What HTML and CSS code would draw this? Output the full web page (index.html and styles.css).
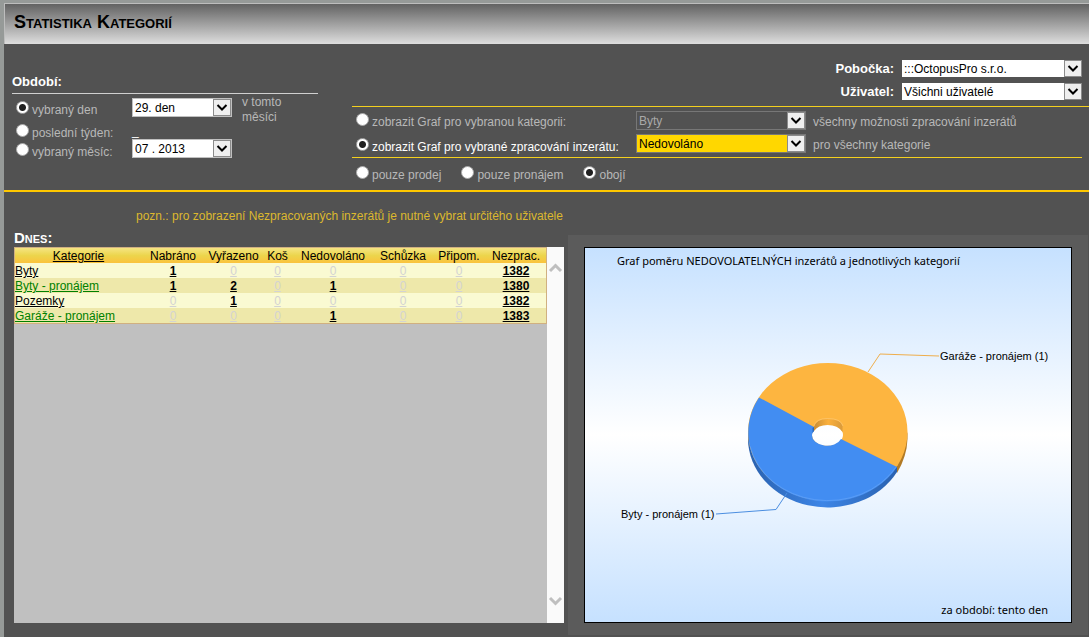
FILE: index.html
```html
<!DOCTYPE html>
<html lang="cs">
<head>
<meta charset="utf-8">
<title>Statistika Kategorií</title>
<link rel="stylesheet" href="styles.css">
</head>
<body>
<svg class="defs" aria-hidden="true"><symbol id="chevron" viewBox="0 0 16 15"><path d="M3.500 5l4.500 4.500 4.500-4.500" fill="none" stroke="#000" stroke-width="2"/></symbol></svg>
<div class="page">
  <header class="title-bar"><h1>Statistika Kategorií</h1></header>

  <form class="filters">
    <fieldset class="period">
      <legend>Období:</legend>
      <div class="period-grid">
        <label class="choice"><input type="radio" name="period" checked><span>vybraný den</span></label>
        <span class="select day"><select aria-label="Den"><option>29. den</option></select><svg><use href="#chevron"/></svg></span>
        <span class="hint">v tomto měsíci</span>
        <label class="choice week"><input type="radio" name="period"><span>poslední týden:</span></label>
        <a class="week-link" href="#">_</a>
        <label class="choice month"><input type="radio" name="period"><span>vybraný měsíc:</span></label>
        <span class="select day"><select aria-label="Měsíc"><option>07 . 2013</option></select><svg><use href="#chevron"/></svg></span>
      </div>
    </fieldset>

    <div class="scope">
      <div class="owner">
        <label for="branch">Pobočka:</label>
        <span class="select plain"><select id="branch"><option>:::OctopusPro s.r.o.</option></select><svg><use href="#chevron"/></svg></span>
        <label for="user">Uživatel:</label>
        <span class="select plain"><select id="user"><option>Všichni uživatelé</option></select><svg><use href="#chevron"/></svg></span>
      </div>
      <div class="graph-options">
        <label class="choice"><input type="radio" name="graph"><span>zobrazit Graf pro vybranou kategorii:</span></label>
        <span class="select muted"><select aria-label="Kategorie"><option>Byty</option></select><svg><use href="#chevron"/></svg></span>
        <span class="hint">všechny možnosti zpracování inzerátů</span>
        <label class="choice active"><input type="radio" name="graph" checked><span>zobrazit Graf pro vybrané zpracování inzerátu:</span></label>
        <span class="select gold"><select aria-label="Zpracování"><option>Nedovoláno</option></select><svg><use href="#chevron"/></svg></span>
        <span class="hint">pro všechny kategorie</span>
      </div>
      <div class="deal">
        <label class="choice"><input type="radio" name="deal"><span>pouze prodej</span></label>
        <label class="choice"><input type="radio" name="deal"><span>pouze pronájem</span></label>
        <label class="choice"><input type="radio" name="deal" checked><span>obojí</span></label>
      </div>
    </div>
  </form>

  <main class="content">
    <section class="stats">
      <p class="note">pozn.: pro zobrazení Nezpracovaných inzerátů je nutné vybrat určitého uživatele</p>
      <h2>Dnes:</h2>
      <div class="list">
        <div class="list-body">
          <table>
            <colgroup><col class="c-name"><col class="c-taken"><col class="c-out"><col class="c-bin"><col class="c-missed"><col class="c-meet"><col class="c-remind"><col class="c-open"></colgroup>
            <thead><tr><th><a href="#">Kategorie</a></th><th>Nabráno</th><th>Vyřazeno</th><th>Koš</th><th>Nedovoláno</th><th>Schůzka</th><th>Připom.</th><th>Nezprac.</th></tr></thead>
            <tbody>
              <tr><td><a href="#">Byty</a></td><td><a class="num" href="#">1</a></td><td><a class="zero" href="#">0</a></td><td><a class="zero" href="#">0</a></td><td><a class="zero" href="#">0</a></td><td><a class="zero" href="#">0</a></td><td><a class="zero" href="#">0</a></td><td><a class="num" href="#">1382</a></td></tr>
              <tr><td><a class="rent" href="#">Byty - pronájem</a></td><td><a class="num" href="#">1</a></td><td><a class="num" href="#">2</a></td><td><a class="zero" href="#">0</a></td><td><a class="num" href="#">1</a></td><td><a class="zero" href="#">0</a></td><td><a class="zero" href="#">0</a></td><td><a class="num" href="#">1380</a></td></tr>
              <tr><td><a href="#">Pozemky</a></td><td><a class="zero" href="#">0</a></td><td><a class="num" href="#">1</a></td><td><a class="zero" href="#">0</a></td><td><a class="zero" href="#">0</a></td><td><a class="zero" href="#">0</a></td><td><a class="zero" href="#">0</a></td><td><a class="num" href="#">1382</a></td></tr>
              <tr><td><a class="rent" href="#">Garáže - pronájem</a></td><td><a class="zero" href="#">0</a></td><td><a class="zero" href="#">0</a></td><td><a class="zero" href="#">0</a></td><td><a class="num" href="#">1</a></td><td><a class="zero" href="#">0</a></td><td><a class="zero" href="#">0</a></td><td><a class="num" href="#">1383</a></td></tr>
            </tbody>
          </table>
        </div>
        <div class="scrollbar" aria-hidden="true">
          <svg width="17" height="17" viewBox="0 0 17 17"><path d="M3 11L8.500 5.500 14 11" fill="none" stroke="#bfbfbf" stroke-width="3"/></svg>
          <svg width="17" height="17" viewBox="0 0 17 17"><path d="M3 4L8.500 9.500 14 4" fill="none" stroke="#bfbfbf" stroke-width="3"/></svg>
        </div>
      </div>
    </section>

    <section class="chart-panel">
      <div class="chart">
        <svg viewBox="0 0 486 374" role="img" aria-label="Graf poměru">
          <defs>
            <linearGradient id="blueSide"><stop offset="0" stop-color="#2a61ae"/><stop offset="0.500" stop-color="#3d85e6"/><stop offset="1" stop-color="#2a61ae"/></linearGradient>
            <linearGradient id="goldHole"><stop offset="0" stop-color="#c98d35"/><stop offset="0.500" stop-color="#fbb03b"/><stop offset="1" stop-color="#d99a3b"/></linearGradient>
          </defs>
          <text class="chart-title" x="32" y="17">Graf poměru NEDOVOLATELNÝCH inzerátů a jednotlivých kategorií</text>
          <path d="M163 184V191A79.500 69 0 0 0 312 224V217Z" fill="url(#blueSide)"/>
          <path d="M322.500 184V191Q322 208 312 225V218Z" fill="#b17a26"/>
          <path fill-rule="evenodd" fill="#fdb540" d="M163 184A79.750 69 0 0 1 322.500 184A79.750 69 0 0 1 163 184ZM227 187A15 10.500 0 0 0 258 187A15 10.500 0 0 0 227 187Z"/>
          <path fill="#428df2" d="M174 149.500L229 179V183Q227 185 227 187A15 10.500 0 0 0 256 191L312 219A79.500 69 0 0 1 174 149.500Z"/>
          <path d="M229 183V179Q231 171 242.500 171Q256 171 257.500 178V184Q253 177 242.500 177Q233 177 229 183Z" fill="url(#goldHole)"/>
          <path d="M229 178Q231 170.500 242.500 170.500Q256 170.500 258 178" fill="none" stroke="#ffd08a" stroke-width="0.500"/>
          <path d="M227.500 180L229 179V183L227.500 185Z" fill="#2e68b5"/>
          <path d="M165 198A79.500 69 0 0 0 311 219" fill="none" stroke="#70adfb" stroke-width="0.500"/>
          <path d="M283 124L295 106 354 108" fill="none" stroke="#efae4c"/>
          <path d="M202 245L191 261.500 131 266" fill="none" stroke="#4b8ee0"/>
          <text class="slice-label" x="355" y="112">Garáže - pronájem (1)</text>
          <text class="slice-label" x="36" y="270">Byty - pronájem (1)</text>
          <text class="chart-title" x="463" y="366" text-anchor="end">za období: tento den</text>
        </svg>
      </div>
    </section>
  </main>
</div>
</body>
</html>
```

FILE: styles.css
```css
* { box-sizing: border-box; }

body {
  margin: 0;
  padding: 3px 0 0 4px;
  min-height: 100vh;
  display: flex;
  background: #969a98;
  color: #b8b8b8;
  font: 12px/15px "Liberation Sans", Arial, sans-serif;
}

.defs { position: absolute; width: 0; height: 0; }

.page { flex: 1; display: flex; flex-direction: column; background: #525252; }

.title-bar {
  height: 41px;
  padding: 8px 9px;
  border: solid #bdbdbd;
  border-width: 1px 0 0 1px;
  background: linear-gradient(#626262, #dedede);
}

h1, h2 { margin: 0; font-variant: small-caps; font-weight: bold; }
h1 { font-size: 18px; line-height: 20px; color: #000; }
h2 { margin-left: 10px; font-size: 15px; line-height: 17px; color: #fff; }

.filters {
  display: flex;
  gap: 34px;
  height: 148px;
  border-bottom: 2px solid #ffc800;
}

.period { flex: 0 0 306px; margin: 29px 0 0 8px; padding: 0; border: 0; }
.period legend {
  width: 100%;
  padding: 1px 0 3px;
  border-bottom: 1px solid #d0d0d0;
  font-size: 13px;
  font-weight: bold;
  line-height: 16px;
  color: #fff;
}
.period-grid {
  display: grid;
  grid-template-columns: 116px 100px 50px;
  grid-template-rows: 30px 15px 22px;
  column-gap: 4px;
  align-items: start;
}
.period-grid .select { margin-top: 4px; }
.period-grid .month ~ .select { margin-top: 0; }
.period-grid .hint { padding: 1px 0 0 6px; }
.period-grid .choice { padding-top: 7px; }
.period-grid .week { padding-top: 0; }
.period-grid .month { padding-top: 4px; }
.week-link { grid-column: 2 / 4; color: #fff; text-decoration: none; line-height: 15px; }

.choice { display: flex; align-items: flex-start; gap: 3px; padding-left: 4px; }
.choice span { padding-top: 2px; }
.choice input {
  appearance: none;
  flex: none;
  width: 13px;
  height: 13px;
  margin: 0;
  border: 1px solid #a9a9a9;
  border-radius: 50%;
  background: #fff;
}
.choice input:checked { background: radial-gradient(circle, #202020 3px, #fff 4px); }
.active { color: #fff; }

.select { position: relative; display: block; height: 19px; border: 1px solid #c0c0c0; }
.select select {
  appearance: none;
  display: block;
  width: 100%;
  height: 100%;
  margin: 0;
  padding: 1px 20px 0 2px;
  border: 0;
  border-radius: 0;
  background: #fff;
  color: #000;
  font: inherit;
}
.select svg {
  position: absolute;
  top: 0;
  right: 0;
  width: 18px;
  height: 17px;
  border: 1px solid #8b8b8b;
  background: #efefef;
  pointer-events: none;
}
.select.plain { height: 17px; border: 0; }
.select.muted, .select.gold { border-color: #777; }
.select.muted select { background: #525252; color: #a9a9a9; }
.select.gold select { background: #ffd700; }

.scope { flex: 1; padding-top: 16px; }
.owner {
  display: grid;
  grid-template-columns: 1fr 180px;
  gap: 6px 8px;
  padding: 0 7px 6px 0;
  border-bottom: 1px solid #f4d01e;
}
.owner label { padding-top: 1px; font-size: 13px; font-weight: bold; line-height: 16px; text-align: right; color: #fff; }

.graph-options {
  display: grid;
  grid-template-columns: 280px 170px 1fr;
  gap: 4px;
  margin-right: 7px;
  padding: 4px 0 2px;
  border-bottom: 1px solid #f4d01e;
}
.graph-options .choice { padding-top: 2px; }
.graph-options .active { padding-top: 4px; }
.graph-options .hint { padding: 4px 0 0 3px; }

.deal { display: flex; gap: 16px; padding-top: 8px; }

.content { flex: 1; display: flex; }
.stats { flex: 0 0 564px; display: flex; flex-direction: column; padding: 17px 4px 14px 0; }
.note { margin: 0 0 5px 132px; color: #dcb82e; }
.list { flex: 1; display: flex; margin: 1px 0 0 10px; }
.list-body { flex: 1; background: #c0c0c0; }

table {
  width: 100%;
  table-layout: fixed;
  border-collapse: separate;
  border-spacing: 0;
  border: 1px solid #d0b080;
  color: #000;
}
.c-name { width: 127px; }
.c-taken { width: 62px; }
.c-out { width: 59px; }
.c-bin { width: 29px; }
.c-missed { width: 82px; }
.c-meet { width: 58px; }
.c-remind { width: 54px; }
th, td { height: 15px; padding: 2px 0 0; line-height: 13px; text-align: center; white-space: nowrap; }
th { font-weight: normal; }
thead tr { background: linear-gradient(#f5e582, #ecd54c 50%, #fbc23c); }
tbody tr { background: #fafad2; }
tbody tr:nth-child(even) { background: #eee8aa; }
td:first-child { text-align: left; }
td a, th a { color: #000; }
td .rent { color: #008000; }
td .zero { color: #d3d3d3; }
td .num { font-weight: bold; }

.scrollbar {
  flex: 0 0 17px;
  display: flex;
  flex-direction: column;
  justify-content: space-between;
  padding: 13px 0 12px;
  background: #fafafa;
}

.chart-panel { flex: 1; display: flex; margin: 43px 1px 2px 0; padding: 12px 16px; background: #5b5b5b; }
.chart {
  flex: 1;
  border: 1px solid #000;
  background: linear-gradient(#c6e1ff, #fff 50%, #c6e1ff);
}
.chart svg { display: block; width: 100%; }
.chart-title { font: 11px "Noto Sans", sans-serif; }
.slice-label { font: 11px "Liberation Sans", Arial, sans-serif; }
```
